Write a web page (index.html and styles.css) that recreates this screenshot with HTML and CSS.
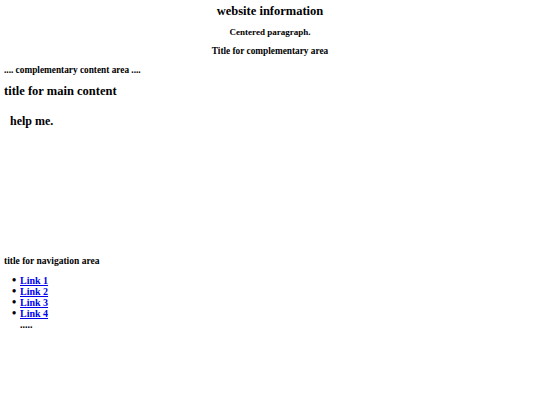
FILE: index.html
```html
<!DOCTYPE html>
<html>
<head>
<meta charset="utf-8">
<link rel="stylesheet" href="styles.css">
</head>
<body>
<header class="site-header">
  <h1 class="site-title">website information</h1>
  <p class="centered">Centered paragraph.</p>
</header>
<aside class="complementary">
  <h2 class="aside-title">Title for complementary area</h2>
  <p class="aside-text">.... complementary content area ....</p>
</aside>
<main class="main">
  <h2 class="main-title">title for main content</h2>
  <p class="help">help me.</p>
</main>
<nav class="nav">
  <h2 class="nav-title">title for navigation area</h2>
  <ul class="nav-list">
    <li class="item"><a href="#">Link 1</a></li>
    <li class="item"><a href="#">Link 2</a></li>
    <li class="item"><a href="#">Link 3</a></li>
    <li class="item"><a href="#">Link 4</a></li>
    <li class="more">.....</li>
  </ul>
</nav>
</body>
</html>
```
FILE: styles.css
```css
html, body {
  background: #fff;
}
body {
  margin: 0 4px;
  font-family: "Liberation Serif", "Times New Roman", serif;
  font-weight: bold;
  color: #000;
}
h1, h2, p, ul {
  margin: 0;
  padding: 0;
}
.site-title {
  font-size: 12.5px;
  line-height: 16px;
  text-align: center;
  margin-top: 3px;
}
.centered {
  font-size: 9px;
  line-height: 12px;
  text-align: center;
  margin-top: 7px;
}
.aside-title {
  font-size: 9.3px;
  line-height: 12px;
  text-align: center;
  margin-top: 7px;
}
.aside-text {
  font-size: 9.3px;
  line-height: 12px;
  margin-top: 7px;
}
.main {
  height: 172px;
}
.main-title {
  font-size: 12.5px;
  line-height: 16px;
  margin-top: 7px;
}
.help {
  font-size: 12px;
  line-height: 16px;
  margin-top: 14px;
  padding-left: 6px;
}
.nav-title {
  font-size: 9.5px;
  line-height: 12px;
}
.nav-list {
  font-size: 10px;
  line-height: 11px;
  margin-top: 8px;
  padding-left: 16px;
  list-style: none;
}
.nav-list .item::before {
  content: "\2022";
  display: inline-block;
  width: 8px;
  margin-left: -8px;
  font-size: 12px;
}
.nav-list a {
  color: #0000ee;
  text-decoration: underline;
}
```
